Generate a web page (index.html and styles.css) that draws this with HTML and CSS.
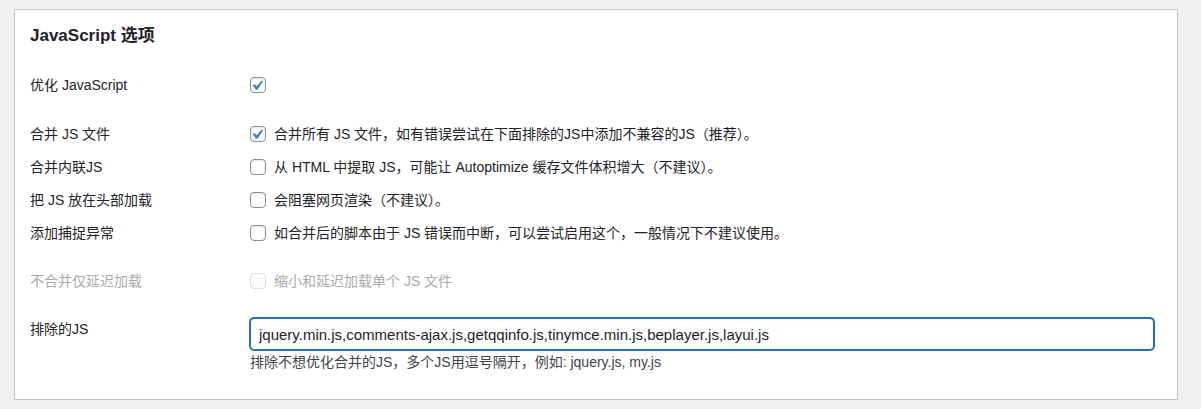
FILE: index.html
```html
<!DOCTYPE html>
<html lang="zh-CN">
<head>
<meta charset="utf-8">
<title>JavaScript 选项</title>
<link rel="stylesheet" href="styles.css">
</head>
<body>
<div class="card">
  <h2 class="title">JavaScript 选项</h2>

  <div class="row row-first">
    <div class="label">优化 JavaScript</div>
    <div class="field">
      <span class="cb checked"><svg viewBox="3 1.5 16 16" width="16" height="16"><path d="M14.83 4.89l1.34.94-5.81 8.38H9.02L5.78 9.67l1.34-1.25 2.57 2.4z"/></svg></span>
    </div>
  </div>

  <div class="group">
    <div class="row">
      <div class="label">合并 JS 文件</div>
      <div class="field">
        <span class="cb checked"><svg viewBox="3 1.5 16 16" width="16" height="16"><path d="M14.83 4.89l1.34.94-5.81 8.38H9.02L5.78 9.67l1.34-1.25 2.57 2.4z"/></svg></span>
        <span class="text">合并所有 JS 文件，如有错误尝试在下面排除的JS中添加不兼容的JS（推荐）。</span>
      </div>
    </div>
    <div class="row">
      <div class="label">合并内联JS</div>
      <div class="field">
        <span class="cb"></span>
        <span class="text">从 HTML 中提取 JS，可能让 Autoptimize 缓存文件体积增大（不建议）。</span>
      </div>
    </div>
    <div class="row">
      <div class="label">把 JS 放在头部加载</div>
      <div class="field">
        <span class="cb"></span>
        <span class="text">会阻塞网页渲染（不建议）。</span>
      </div>
    </div>
    <div class="row">
      <div class="label">添加捕捉异常</div>
      <div class="field">
        <span class="cb"></span>
        <span class="text">如合并后的脚本由于 JS 错误而中断，可以尝试启用这个，一般情况下不建议使用。</span>
      </div>
    </div>
  </div>

  <div class="row row-disabled">
    <div class="label">不合并仅延迟加载</div>
    <div class="field">
      <span class="cb"></span>
      <span class="text">缩小和延迟加载单个 JS 文件</span>
    </div>
  </div>

  <div class="row row-input">
    <div class="label">排除的JS</div>
    <div class="field-col">
      <input class="text-input" type="text" value="jquery.min.js,comments-ajax.js,getqqinfo.js,tinymce.min.js,beplayer.js,layui.js">
      <p class="description">排除不想优化合并的JS，多个JS用逗号隔开，例如: jquery.js, my.js</p>
    </div>
  </div>
</div>
</body>
</html>
```

FILE: styles.css
```css
html, body {
  margin: 0;
  padding: 0;
}
body {
  background: #f0f0f1;
  color: #1d2327;
  font-family: "Liberation Sans", "Noto Sans CJK SC", sans-serif;
  font-size: 14px;
  line-height: 20px;
  padding: 9px 23px 9px 14px;
}
.card {
  background: #fff;
  border: 1px solid #c3c4c7;
  padding: 14px 23px 27px 15px;
}
.title {
  margin: 0;
  font-size: 17px;
  font-weight: bold;
  line-height: 24px;
}
.row {
  display: grid;
  grid-template-columns: 220px 1fr;
  align-items: center;
  height: 33px;
}
.row-first {
  margin-top: 20px;
}
.group {
  margin-top: 16px;
}
.row-disabled {
  margin-top: 15px;
}
.row-disabled .label,
.row-disabled .text {
  color: #a7aaad;
}
.row-disabled .cb {
  border-color: #dcdcde;
  background: #fcfcfc;
  box-shadow: none;
}
.field {
  display: flex;
  align-items: center;
  gap: 8px;
}
.cb {
  box-sizing: border-box;
  width: 16px;
  height: 16px;
  border: 1px solid #8c8f94;
  border-radius: 4px;
  background: #fff;
  box-shadow: inset 0 1px 2px rgba(0, 0, 0, 0.1);
  display: flex;
  align-items: center;
  justify-content: center;
  flex: none;
}
.cb svg {
  display: block;
  fill: #3582c4;
  margin: -1px;
}
.row-input {
  margin-top: 21px;
  height: auto;
  align-items: start;
}
.row-input .label {
  padding-top: 1px;
}
.field-col {
  display: flex;
  flex-direction: column;
}
.text-input {
  box-sizing: border-box;
  width: 904px;
  height: 32px;
  margin: 0;
  padding: 0 8px;
  border: 1px solid #2271b1;
  border-radius: 4px;
  box-shadow: 0 0 0 1px #2271b1;
  outline: none;
  font-family: "Liberation Sans", "Noto Sans CJK SC", sans-serif;
  font-size: 15px;
  color: #1d2327;
  background: #fff;
}
.description {
  margin: 2px 0 0;
  font-size: 14px;
  line-height: 20px;
  color: #3c434a;
}
```
